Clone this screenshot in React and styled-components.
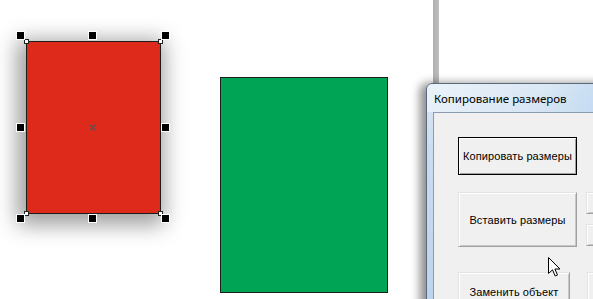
import React from "react";
import styled, { createGlobalStyle } from "styled-components";

const Global = createGlobalStyle`
  html, body { margin: 0; padding: 0; background: #ffffff; overflow: hidden; }
  #root { width: 593px; height: 299px; }
`;

const Canvas = styled.div`
  position: relative;
  width: 593px;
  height: 299px;
  overflow: hidden;
  background: #ffffff;
`;

const Rect = styled.div`
  position: absolute;
  box-sizing: border-box;
  left: ${(p) => p.$x}px;
  top: ${(p) => p.$y}px;
  width: ${(p) => p.$w}px;
  height: ${(p) => p.$h}px;
  background: ${(p) => p.$fill};
  border: 1px solid #1c1c1c;
  box-shadow: ${(p) => (p.$shadow ? "-3px 5px 20px 6px rgba(0,0,0,0.38)" : "none")};
`;

const Handle = styled.div`
  position: absolute;
  box-sizing: border-box;
  width: 9px;
  height: 9px;
  left: ${(p) => p.$x - 4}px;
  top: ${(p) => p.$y - 4}px;
  background: #000;
  border: 1px solid #fff;
`;

const Corner = styled.div`
  position: absolute;
  box-sizing: border-box;
  width: 5px;
  height: 5px;
  left: ${(p) => p.$x - 2}px;
  top: ${(p) => p.$y - 2}px;
  background: #fff;
  border: 1px solid #222;
`;

const CenterMark = styled.svg`
  position: absolute;
  left: 89px;
  top: 124px;
`;

const Divider = styled.div`
  position: absolute;
  left: 433px;
  top: 0;
  width: 6px;
  height: 100%;
  background: linear-gradient(90deg, #b0b0b0, #bdbdbd);
`;

const Window = styled.div`
  position: absolute;
  left: 426px;
  top: 83px;
  width: 200px;
  height: 240px;
  box-sizing: border-box;
  display: flex;
  flex-direction: column;
  border: 1px solid #5a6a7c;
  border-radius: 6px 6px 0 0;
  background: linear-gradient(180deg, #dbe8f5 0%, #c9dcf0 30%, #bcd3ec 100%);
  box-shadow: -4px 2px 10px 2px rgba(0,0,0,0.45);
`;

const TitleBar = styled.div`
  height: 28px;
  display: flex;
  align-items: center;
  padding-left: 7px;
  font-family: "Noto Sans", "Open Sans", sans-serif;
  font-size: 11.5px;
  color: #000;
  white-space: nowrap;
  background: linear-gradient(90deg, rgba(255,255,255,0.45), rgba(255,255,255,0) 60%, rgba(170,205,240,0.6));
  border-radius: 6px 6px 0 0;
`;

const Client = styled.div`
  flex: 1;
  margin-left: 6px;
  border-top: 1px solid #8a9bb0;
  border-left: 1px solid #8a9bb0;
  background: #f0f0f0;
  padding: 24px 0 0 24px;
  display: flex;
  flex-direction: column;
`;

const Row = styled.div`
  display: flex;
  gap: ${(p) => p.$gap || 9}px;
  margin-top: ${(p) => p.$mt || 0}px;
`;

const Stack = styled.div`
  display: flex;
  flex-direction: column;
  gap: 10px;
`;

const Button = styled.div`
  box-sizing: border-box;
  flex: none;
  width: ${(p) => p.$w}px;
  height: ${(p) => p.$h}px;
  display: flex;
  align-items: center;
  justify-content: center;
  font-family: "Liberation Sans", Arial, sans-serif;
  font-size: 11px;
  letter-spacing: 0.1px;
  color: #000;
  white-space: nowrap;
  background: #f0f0f0;
  border: 1px solid;
  border-color: ${(p) => (p.$default ? "#000" : "#e3e3e3 #a0a0a0 #a0a0a0 #e3e3e3")};
  box-shadow: ${(p) =>
    p.$default
      ? "inset 1px 1px 0 #ffffff, inset -1px -1px 0 #a0a0a0"
      : "inset 1px 1px 0 #ffffff, inset -1px -1px 0 #c8c8c8"};
`;

const Cursor = styled.svg`
  position: absolute;
  left: 548px;
  top: 257px;
`;

export default function App() {
  const handles = [
    [20, 35], [92, 35], [165, 35],
    [20, 127], [165, 127],
    [20, 218], [92, 218], [165, 218],
  ];
  const corners = [[26, 41], [160, 41], [26, 213], [160, 213]];
  return (
    <>
      <Global />
      <Canvas>
        <Rect $x={26} $y={41} $w={135} $h={173} $fill="#dd2a1b" $shadow />
        {corners.map(([x, y]) => (
          <Corner key={`c${x}-${y}`} $x={x} $y={y} />
        ))}
        {handles.map(([x, y]) => (
          <Handle key={`h${x}-${y}`} $x={x} $y={y} />
        ))}
        <CenterMark width="7" height="7" viewBox="0 0 7 7">
          <path d="M1 1 L6 6 M6 1 L1 6" stroke="#555" strokeWidth="1.4" />
        </CenterMark>
        <Rect $x={220} $y={77} $w={168} $h={216} $fill="#00a455" />
        <Divider />
        <Window>
          <TitleBar>Копирование размеров</TitleBar>
          <Client>
            <Row>
              <Button $w={119} $h={38} $default>Копировать размеры</Button>
            </Row>
            <Row $mt={17}>
              <Button $w={119} $h={55}>Вставить размеры</Button>
              <Stack>
                <Button $w={30} $h={22} />
                <Button $w={30} $h={22} />
              </Stack>
            </Row>
            <Row $mt={25} $gap={17}>
              <Button $w={112} $h={40}>Заменить объект</Button>
              <Button $w={30} $h={40} />
            </Row>
          </Client>
        </Window>
        <Cursor width="13" height="21" viewBox="0 0 13 21">
          <path
            d="M0.5 0.5 L0.5 16.5 L4.5 12.8 L7.2 19 L9.5 18 L6.9 12 L12 12 Z"
            fill="#fff"
            stroke="#000"
            strokeWidth="1"
            strokeLinejoin="miter"
          />
        </Cursor>
      </Canvas>
    </>
  );
}
